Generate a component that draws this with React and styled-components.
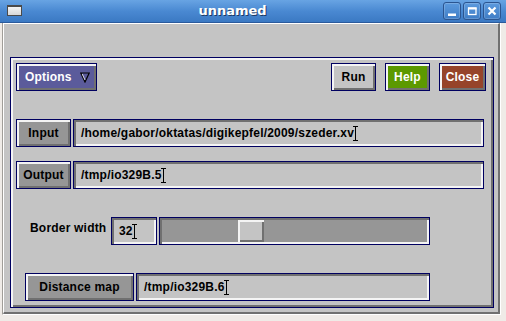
import React from 'react'
import styled, { createGlobalStyle, css } from 'styled-components'

const NAVY = '#000060'
const GRAY = '#c4c4c4'
const DARK = '#707070'

const GlobalStyle = createGlobalStyle`
  html, body {
    margin: 0;
    padding: 0;
    background: #efebe7;
  }
  body {
    width: 506px;
    height: 321px;
    overflow: hidden;
    font-family: "Liberation Sans", Arial, sans-serif;
  }
  * { box-sizing: border-box; }
`

const raised = css`
  border: 1px solid ${NAVY};
  box-shadow: inset 2px 2px 0 #f4f4f4, inset -2px -2px 0 ${DARK};
`
const sunken = css`
  border: 1px solid ${NAVY};
  box-shadow: inset 2px 2px 0 ${DARK}, inset -2px -2px 0 #f4f4f4;
`

const Window = styled.div`
  width: 506px;
  height: 321px;
  display: flex;
  flex-direction: column;
  background: #efebe7;
`

const TitleBar = styled.div`
  height: 23px;
  display: flex;
  align-items: center;
  padding: 0 5px 0 7px;
  background: linear-gradient(180deg, #68a4e3 0%, #4a89d2 50%, #3b79c3 100%);
  border-bottom: 1px solid #2a5a9c;
`

const WinIcon = styled.div`
  width: 15px;
  height: 11px;
  margin-top: -1px;
  background: linear-gradient(180deg, #f4f4f4, #d8d8d8);
  border: 1px solid #4a4a4a;
  border-top-width: 2px;
`

const Title = styled.div`
  flex: 1;
  text-align: center;
  color: #fff;
  font-family: "DejaVu Sans", sans-serif;
  font-weight: bold;
  font-size: 13px;
  text-shadow: 1px 1px 0 #1d3a66;
  margin-top: -1px;
`

const TitleButtons = styled.div`
  display: flex;
  gap: 2px;
`

const TitleButton = styled.div`
  width: 18px;
  height: 18px;
  border: 1px solid #2b5590;
  border-radius: 3px;
  background: linear-gradient(180deg, #5c9ade, #3f7dc6);
  box-shadow: inset 0 0 0 1px rgba(255, 255, 255, 0.18);
  display: flex;
  align-items: center;
  justify-content: center;
`

const Frame = styled.div`
  flex: 1;
  display: flex;
  padding: 0 5px 6px 2px;
`

const FrameEdge = styled.div`
  flex: 1;
  display: flex;
  border-left: 1px solid #a09d98;
  border-right: 1px solid #fff;
  border-bottom: 1px solid #fff;
`

const Client = styled.div`
  flex: 1;
  display: flex;
  background: ${GRAY};
  border-top: 1px solid #fff;
  border-left: 1px solid #fff;
  border-right: 2px solid ${DARK};
  border-bottom: 2px solid ${DARK};
  padding: 33px 4px 4px 6px;
`

const Panel = styled.div`
  flex: 1;
  display: flex;
  flex-direction: column;
  padding: 2px;
  ${raised};
`

const Row = styled.div`
  display: flex;
  align-items: stretch;
  height: 28px;
  margin-top: ${p => p.$mt}px;
  padding-left: ${p => p.$indent}px;
  gap: 2px;
`

const TopBar = styled.div`
  display: flex;
  height: 28px;
  margin-top: 3px;
  padding: 0 5px 0 3px;
  gap: 9px;
`

const Spacer = styled.div`
  flex: 1;
`

const Button = styled.div`
  width: ${p => p.$w}px;
  display: flex;
  align-items: center;
  justify-content: ${p => (p.$menu ? 'space-between' : 'center')};
  padding: ${p => (p.$menu ? '0 6px 0 8px' : '0')};
  background: ${p => p.$bg || '#969696'};
  color: ${p => p.$fg || '#000'};
  font-size: 12px;
  font-weight: bold;
  letter-spacing: 0.2px;
  ${raised};
`

const Field = styled.div`
  width: ${p => p.$w}px;
  display: flex;
  align-items: center;
  padding-left: 7px;
  background: ${GRAY};
  font-size: 12px;
  font-weight: bold;
  letter-spacing: 0.2px;
  color: #000;
  white-space: nowrap;
  ${sunken};
`

const Cursor = styled.span`
  position: relative;
  display: inline-block;
  width: 5px;
  height: 15px;
  margin-left: -1px;
  border-top: 1px solid #000;
  border-bottom: 1px solid #000;
  &::before {
    content: '';
    position: absolute;
    left: 2px;
    top: 0;
    bottom: 0;
    width: 1px;
    background: #000;
  }
`

const Label = styled.div`
  width: 79px;
  font-size: 12px;
  font-weight: bold;
  letter-spacing: 0.2px;
  padding-top: 4px;
  color: #000;
`

const Trough = styled.div`
  position: relative;
  width: ${p => p.$w}px;
  background: #969696;
  ${sunken};
`

const Thumb = styled.div`
  position: absolute;
  top: 2px;
  bottom: 2px;
  width: 26px;
  background: ${GRAY};
  box-shadow: inset 2px 2px 0 #f4f4f4, inset -2px -2px 0 ${DARK};
`

const Slider = ({ value, width }) => {
  const inner = width - 6 - 26
  return (
    <Trough $w={width}>
      <Thumb style={{ left: 2 + Math.round((inner * value) / 100) }} />
    </Trough>
  )
}

const TextField = ({ w, children }) => (
  <Field $w={w}>
    <span>{children}</span>
    <Cursor />
  </Field>
)

export default function App() {
  return (
    <>
      <GlobalStyle />
      <Window>
        <TitleBar>
          <WinIcon />
          <Title>unnamed</Title>
          <TitleButtons>
            <TitleButton>
              <svg width="16" height="16" viewBox="0 0 16 16">
                <rect x="4" y="10.5" width="8" height="2.5" fill="#fff" />
              </svg>
            </TitleButton>
            <TitleButton>
              <svg width="16" height="16" viewBox="0 0 16 16">
                <rect x="4.5" y="5" width="7.5" height="6.5" fill="none" stroke="#fff" strokeWidth="1.3" />
                <rect x="4" y="4.5" width="8.5" height="2" fill="#fff" />
              </svg>
            </TitleButton>
            <TitleButton>
              <svg width="16" height="16" viewBox="0 0 16 16">
                <path d="M4.5 4.5 L11.5 11.5 M11.5 4.5 L4.5 11.5" stroke="#fff" strokeWidth="2.2" />
              </svg>
            </TitleButton>
          </TitleButtons>
        </TitleBar>
        <Frame>
          <FrameEdge>
            <Client>
              <Panel>
                <TopBar>
                  <Button $w={81} $bg="#5b5b9b" $fg="#fff" $menu>
                    <span>Options</span>
                    <svg width="10" height="11" viewBox="0 0 10 11">
                      <path d="M0.8 1 L9.2 1 L5 10 Z" fill="none" stroke="#000" strokeWidth="1.2" />
                      <path d="M2.2 2 L5 8" stroke="#fff" strokeWidth="0.8" />
                    </svg>
                  </Button>
                  <Spacer />
                  <Button $w={45} $bg={GRAY}>Run</Button>
                  <Button $w={45} $bg="#5c9900" $fg="#fff">Help</Button>
                  <Button $w={47} $bg="#96442a" $fg="#fff">Close</Button>
                </TopBar>

                <Row $mt={28} $indent={3}>
                  <Button $w={55}>Input</Button>
                  <TextField w={411}>/home/gabor/oktatas/digikepfel/2009/szeder.xv</TextField>
                </Row>

                <Row $mt={14} $indent={3}>
                  <Button $w={55}>Output</Button>
                  <TextField w={411}>/tmp/io329B.5</TextField>
                </Row>

                <Row $mt={28} $indent={17}>
                  <Label>Border width</Label>
                  <TextField w={46}>32</TextField>
                  <Slider value={32} width={271} />
                </Row>

                <Row $mt={28} $indent={12}>
                  <Button $w={109}>Distance map</Button>
                  <TextField w={294}>/tmp/io329B.6</TextField>
                </Row>
              </Panel>
            </Client>
          </FrameEdge>
        </Frame>
      </Window>
    </>
  )
}
